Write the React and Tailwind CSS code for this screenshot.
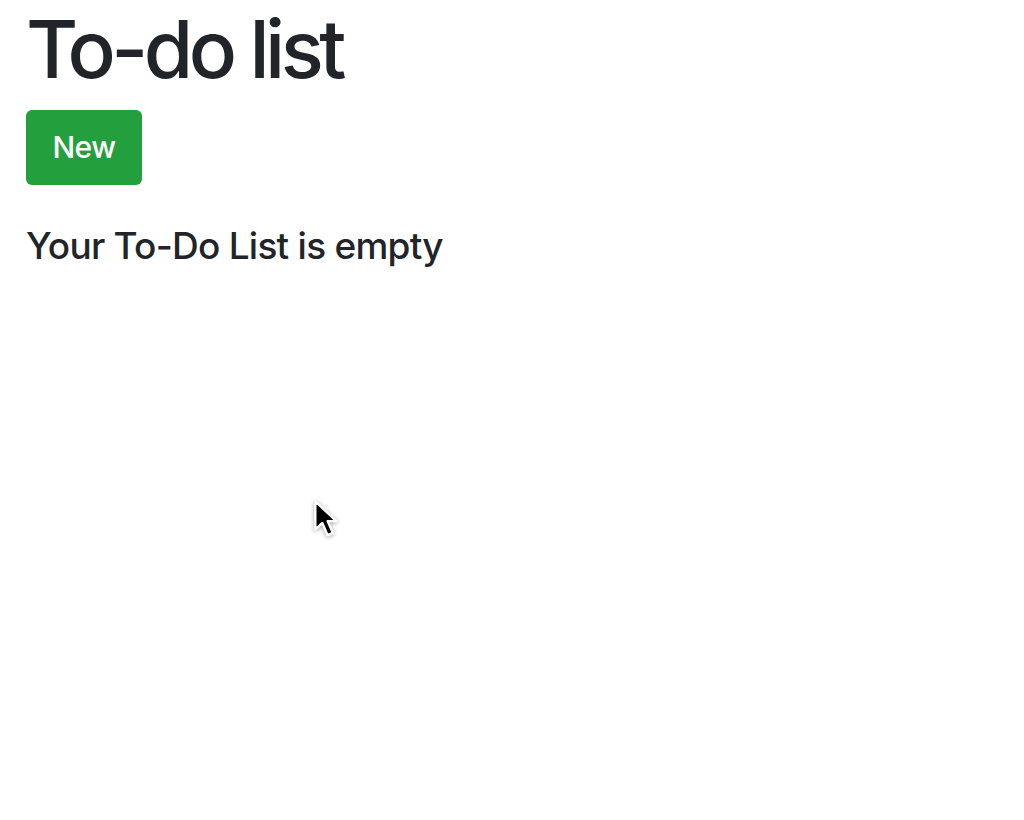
export default function App() {
  return (
    <div className="relative min-h-[820px] bg-white px-[26px] pt-[5px] text-[#212529]" style={{ fontFamily: 'Inter, "Noto Sans", sans-serif' }}>
      <h1 className="text-[80px] leading-[1.1] font-medium tracking-[-4.5px]">To-do list</h1>
      <button
        type="button"
        className="mt-[17px] h-[75px] w-[116px] rounded-[6px] bg-[#249f3e] text-[30px] font-medium tracking-[-0.5px] text-white"
      >
        New
      </button>
      <h2 className="mt-[39px] text-[37px] leading-[1.2] font-medium tracking-[-0.75px]">Your To-Do List is empty</h2>

      {/* mouse cursor */}
      <svg className="absolute left-[313px] top-[499px] drop-shadow-[0_1px_2px_rgba(0,0,0,0.35)]" width="28" height="42" viewBox="0 0 24 36">
        <path d="M2 2 L2 26 L8 20.5 L12.5 31 L17 29 L12.6 19 L20 19 Z" fill="#000" stroke="#fff" strokeWidth="2" strokeLinejoin="round" />
      </svg>
    </div>
  );
}
